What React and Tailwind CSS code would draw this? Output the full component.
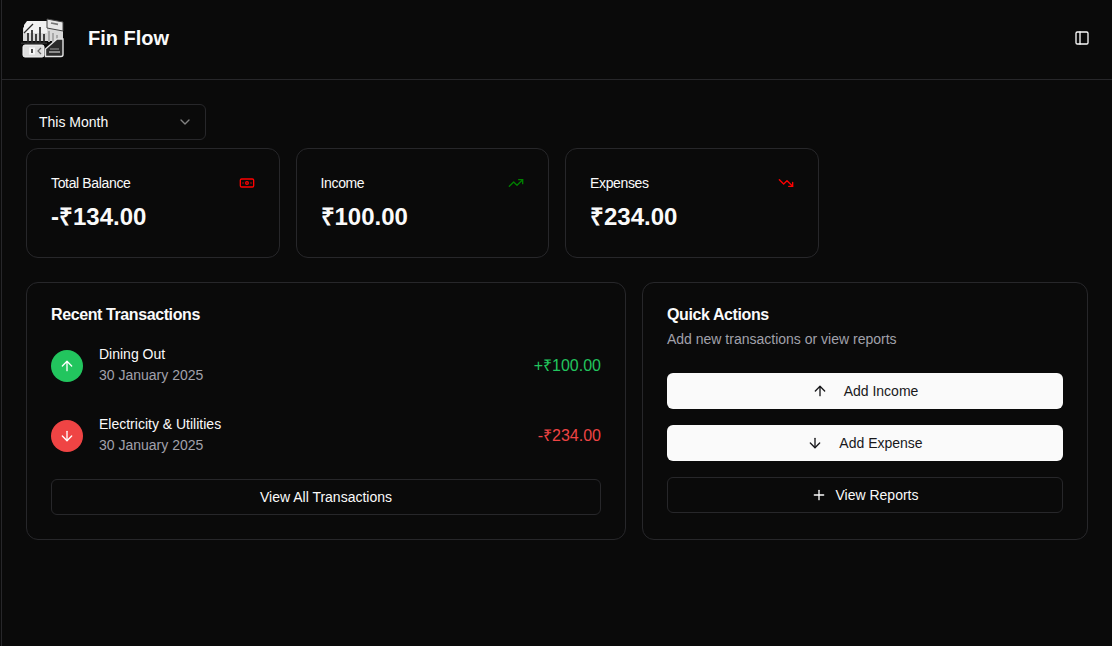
import React from "react";
import { Banknote, TrendingUp, TrendingDown, ArrowUp, ArrowDown, Plus, ChevronDown, PanelLeft } from "lucide-react";

function Logo() {
  return (
    <svg width="44" height="40" viewBox="0 0 44 40" className="shrink-0">
      <path d="M8 3h18l14 4 2 1v15H2V10z" fill="#d8d8d8" />
      <path d="M6 3h20v12H3V7z" fill="#f2f2f2" />
      <path d="M26 1l16 3v9l-16-3z" fill="#e8e8e8" stroke="#444" strokeWidth="1" />
      <path d="M30 5l7 1.4" stroke="#777" strokeWidth="1.6" />
      <path d="M3 15l9-9" fill="none" stroke="#2a2a2a" strokeWidth="1.3" />
      <path d="M7 15v10M11 12v13M15 16v9M19 9v16M23 16v9" stroke="#262626" strokeWidth="1.7" />
      <path d="M28 13v11M32 15v9M36 17v7" stroke="#a8a8a8" strokeWidth="2" />
      <path d="M0 24.5h26v1.6H0z" fill="#2a2a2a" />
      <rect x="2" y="27" width="21" height="12" rx="2" fill="#dedede" stroke="#f5f5f5" />
      <rect x="8" y="29.5" width="6" height="7" fill="#f7f7f7" />
      <path d="M11 31v4" stroke="#222" strokeWidth="1.6" />
      <path d="M20 30l-3 3 3 3" fill="none" stroke="#666" strokeWidth="1.2" />
      <path d="M24.5 38.5V31L36 21h6v15.5a2 2 0 0 1-2 2z" fill="#2b2b2b" stroke="#e4e4e4" strokeWidth="1.4" />
      <path d="M28 34h11" stroke="#cfcfcf" strokeWidth="1.2" />
      <path d="M29 31h9" stroke="#8a8a8a" strokeWidth="1.2" />
    </svg>
  );
}

function Stat({ label, value, children }) {
  return (
    <div className="rounded-xl border border-[#27272a] bg-[#0a0a0a] p-6 h-[110px]">
      <div className="flex items-center justify-between h-5">
        <span className="text-sm tracking-tight text-[#fafafa]">{label}</span>
        {children}
      </div>
      <div className="mt-2 text-2xl font-bold leading-8 text-[#fafafa]">{value}</div>
    </div>
  );
}

function Txn({ up, name, date, amount }) {
  return (
    <div className="flex items-center justify-between h-11">
      <div className="flex items-center gap-4">
        <div className={`flex size-8 items-center justify-center rounded-full text-white ${up ? "bg-[#22c55e]" : "bg-[#ef4444]"}`}>
          {up ? <ArrowUp size={16} /> : <ArrowDown size={16} />}
        </div>
        <div className="mb-1">
          <div className="text-sm leading-5 text-[#fafafa]">{name}</div>
          <div className="mt-px text-sm leading-5 text-[#a1a1aa]">{date}</div>
        </div>
      </div>
      <div className={`text-base ${up ? "text-[#22c55e]" : "text-[#ef4444]"}`}>{amount}</div>
    </div>
  );
}

export default function App() {
  return (
    <div className="min-h-[646px] bg-[#0a0a0a] pl-[1px] font-['Liberation_Sans',Arial,sans-serif] text-[#fafafa]">
      <div className="min-h-[646px] border-l border-[#27272a]">
        <header className="flex h-20 items-center justify-between border-b border-[#27272a] pb-[3px] pl-[19px] pr-[22px]">
          <div className="flex items-center gap-[23px]">
            <Logo />
            <span className="text-xl font-bold">Fin Flow</span>
          </div>
          <PanelLeft size={16} className="text-[#fafafa]" />
        </header>
        <main className="px-6 pt-6">
          <button className="flex h-9 w-[180px] items-center justify-between rounded-md border border-[#27272a] pl-3 pr-3 text-sm text-[#fafafa]">
            This Month
            <ChevronDown size={16} className="text-[#fafafa] opacity-50" />
          </button>
          <div className="mt-2 grid grid-cols-4 gap-4">
            <Stat label="Total Balance" value="-₹134.00"><Banknote size={16} className="text-[#ff0000]" /></Stat>
            <Stat label="Income" value="₹100.00"><TrendingUp size={16} className="text-[#008000]" /></Stat>
            <Stat label="Expenses" value="₹234.00"><TrendingDown size={16} className="text-[#ff0000]" /></Stat>
          </div>
          <div className="mt-6 grid grid-cols-7 gap-4">
            <section className="col-span-4 h-[258px] rounded-xl border border-[#27272a] p-6">
              <h2 className="font-semibold leading-4 tracking-tight">Recent Transactions</h2>
              <div className="mt-[21px] flex flex-col gap-[26px]">
                <Txn up name="Dining Out" date="30 January 2025" amount="+₹100.00" />
                <Txn name="Electricity & Utilities" date="30 January 2025" amount="-₹234.00" />
              </div>
              <button className="mt-[21px] h-9 w-full rounded-md border border-[#27272a] text-sm">View All Transactions</button>
            </section>
            <section className="col-span-3 h-[258px] rounded-xl border border-[#27272a] p-6">
              <h2 className="font-semibold leading-4 tracking-tight">Quick Actions</h2>
              <p className="mt-[6px] text-sm leading-5 text-[#a1a1aa]">Add new transactions or view reports</p>
              <div className="mt-6 flex flex-col gap-4">
                <button className="flex h-9 items-center justify-center gap-4 rounded-md bg-[#fafafa] text-sm text-[#18181b]"><ArrowUp size={16} />Add Income</button>
                <button className="flex h-9 items-center justify-center gap-4 rounded-md bg-[#fafafa] text-sm text-[#18181b]"><ArrowDown size={16} />Add Expense</button>
                <button className="flex h-9 items-center justify-center gap-2 rounded-md border border-[#27272a] text-sm"><Plus size={16} />View Reports</button>
              </div>
            </section>
          </div>
        </main>
      </div>
    </div>
  );
}
